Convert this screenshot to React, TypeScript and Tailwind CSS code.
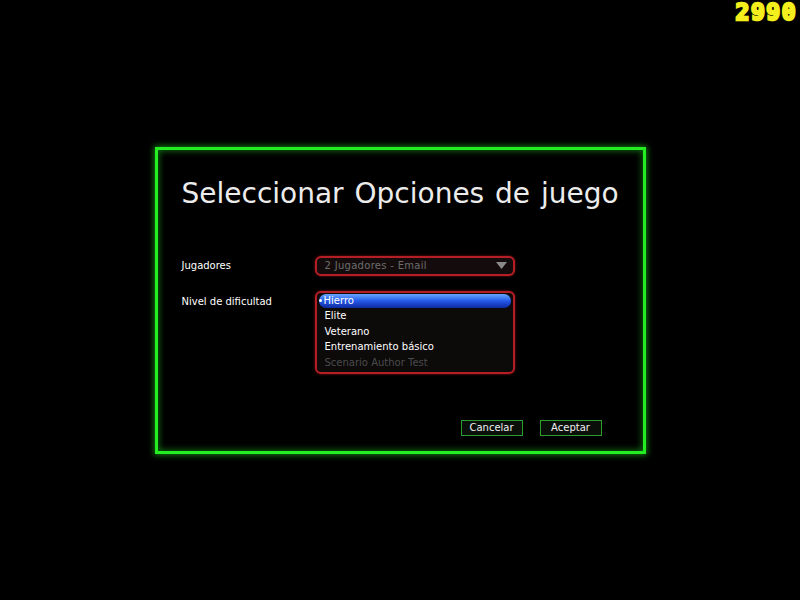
import React from 'react';

const difficulties = [
  { label: 'Hierro', selected: true },
  { label: 'Elite' },
  { label: 'Veterano' },
  { label: 'Entrenamiento básico' },
  { label: 'Scenario Author Test', disabled: true },
];

function ScoreCounter() {
  return (
    <div className="absolute right-[3px] top-0 font-['DejaVu_Sans_Mono',monospace] text-[23px] font-bold leading-[24px] tracking-[1.5px] text-[#f4ee1c] [-webkit-text-stroke:2.5px_#f4ee1c]">
      2990
    </div>
  );
}

function GameButton({ children }: { children: React.ReactNode }) {
  return (
    <button
      type="button"
      className="flex h-[16px] w-[62px] items-center justify-center border border-[#2c9c2c] bg-[#0a0f0a] text-[10px] leading-none text-[#f0f0f0]"
    >
      {children}
    </button>
  );
}

export default function App() {
  return (
    <div className="relative flex h-screen w-full items-center justify-center bg-black font-['DejaVu_Sans',sans-serif]">
      <ScoreCounter />

      <div className="flex h-[307px] w-[491px] flex-col border-[3px] border-[#22ee22] px-[24px] pt-[24px] shadow-[0_0_6px_1px_rgba(40,230,40,0.55),inset_0_0_6px_1px_rgba(40,230,40,0.45)]">
        <h1 className="whitespace-nowrap text-[28px] font-normal leading-[40px] text-[#ececec] [word-spacing:2px]">
          Seleccionar Opciones de juego
        </h1>

        <div className="mt-[42px] flex items-center">
          <span className="w-[133px] text-[10px] text-white">Jugadores</span>
          <div className="flex h-[20px] w-[200px] items-center justify-between rounded-[6px] border-2 border-[#b41e24] bg-[#140c0c] pl-[8px] pr-[6px] shadow-[0_0_3px_rgba(200,30,30,0.6)]">
            <span className="text-[10px] tracking-[0.3px] text-[#6c6c6c]">2 Jugadores - Email</span>
            <svg width="11" height="7" viewBox="0 0 11 7">
              <path d="M0 0h11L5.5 7z" fill="#8a8a8a" />
            </svg>
          </div>
        </div>

        <div className="mt-[15px] flex items-start">
          <span className="mt-[3px] w-[133px] text-[10px] text-white">Nivel de dificultad</span>
          <ul className="flex h-[83px] w-[200px] flex-col rounded-[6px] border-2 border-[#b41e24] bg-[#0d0a0a] px-[2px] pt-[1px] shadow-[0_0_3px_rgba(200,30,30,0.6)]">
            {difficulties.map((d) => (
              <li
                key={d.label}
                className={
                  d.selected
                    ? 'flex h-[14px] items-center rounded-full bg-gradient-to-b from-[#6aa6ff] via-[#2457e8] to-[#0f2aa0] text-[10px] text-white'
                    : d.disabled
                      ? 'flex h-[15.7px] items-center pl-[6px] text-[10px] text-[#4a4a4a]'
                      : 'flex h-[15.7px] items-center pl-[6px] text-[10px] text-white'
                }
              >
                {d.selected && <span className="mr-[1px] h-[3px] w-[3px] rounded-full bg-white" />}
                <span className={d.selected ? 'pl-[1px]' : ''}>{d.label}</span>
              </li>
            ))}
          </ul>
        </div>

        <div className="mt-[46px] flex justify-end gap-[17px] pr-[17px]">
          <GameButton>Cancelar</GameButton>
          <GameButton>Aceptar</GameButton>
        </div>
      </div>
    </div>
  );
}
